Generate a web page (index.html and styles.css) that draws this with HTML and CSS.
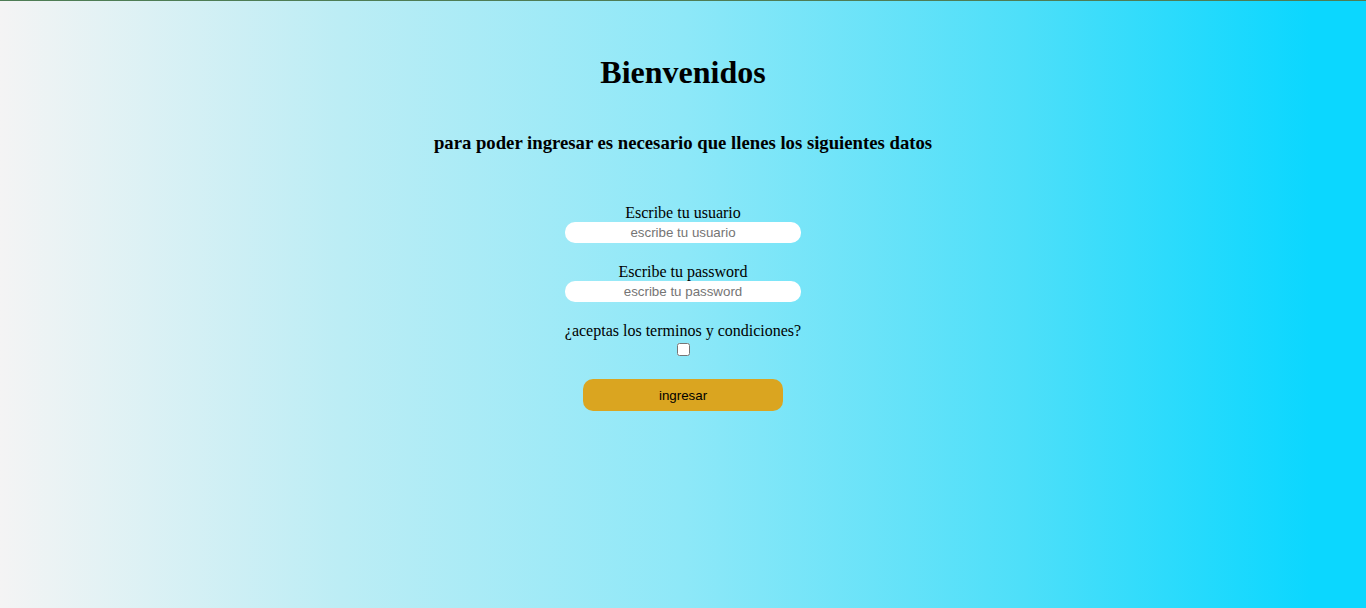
FILE: index.html
```html
<!DOCTYPE html>
<html lang="es">
<head>
<meta charset="utf-8">
<title>Bienvenidos</title>
<link rel="stylesheet" href="styles.css">
</head>
<body>
<main class="page">
  <h1 class="title">Bienvenidos</h1>
  <h3 class="subtitle">para poder ingresar es necesario que llenes los siguientes datos</h3>
  <form class="form" onsubmit="return false;">
    <div class="field">
      <label class="label" for="usuario">Escribe tu usuario</label>
      <input class="input" id="usuario" type="text" placeholder="escribe tu usuario">
    </div>
    <div class="field">
      <label class="label" for="password">Escribe tu password</label>
      <input class="input" id="password" type="password" placeholder="escribe tu password">
    </div>
    <div class="field field-check">
      <label class="label" for="terminos">¿aceptas los terminos y condiciones?</label>
      <input class="check" id="terminos" type="checkbox">
    </div>
    <button class="btn" type="submit">ingresar</button>
  </form>
</main>
</body>
</html>
```

FILE: styles.css
```css
html, body {
  margin: 0;
  padding: 0;
}
body {
  min-height: 100vh;
  box-sizing: border-box;
  border-top: 1px solid #4e7d55;
  background: linear-gradient(90deg, #f4f4f4 0%, #bcedf5 25%, #8ee8f8 50%, #4ddff9 75%, #0bd7ff 96%, #0bd7ff 100%);
  font-family: "Liberation Serif", "Times New Roman", serif;
  color: #000;
}
.page {
  display: flex;
  flex-direction: column;
  align-items: center;
  padding-top: 53px;
}
.title {
  margin: 0;
  font-size: 32px;
  line-height: 37px;
  font-weight: bold;
}
.subtitle {
  margin: 41px 0 0;
  font-size: 18.72px;
  line-height: 22px;
  font-weight: bold;
}
.form {
  display: flex;
  flex-direction: column;
  align-items: center;
  margin-top: 50px;
}
.field {
  display: flex;
  flex-direction: column;
  align-items: center;
  margin-bottom: 20px;
}
.field-check {
  margin-bottom: 23px;
}
.label {
  font-size: 16px;
  line-height: 18px;
}
.input {
  box-sizing: border-box;
  width: 236px;
  height: 21px;
  border: none;
  border-radius: 10px;
  background: #fff;
  padding: 0 8px;
  font-family: "Liberation Sans", Arial, sans-serif;
  font-size: 13.33px;
  text-align: center;
  outline: none;
}
.input::placeholder {
  color: #757575;
}
.check {
  width: 13px;
  height: 13px;
  margin: 3px 0 0;
}
.btn {
  width: 200px;
  height: 32px;
  border: none;
  border-radius: 10px;
  background: #daa520;
  font-family: "Liberation Sans", Arial, sans-serif;
  font-size: 13.33px;
  color: #000;
  cursor: pointer;
}
```
